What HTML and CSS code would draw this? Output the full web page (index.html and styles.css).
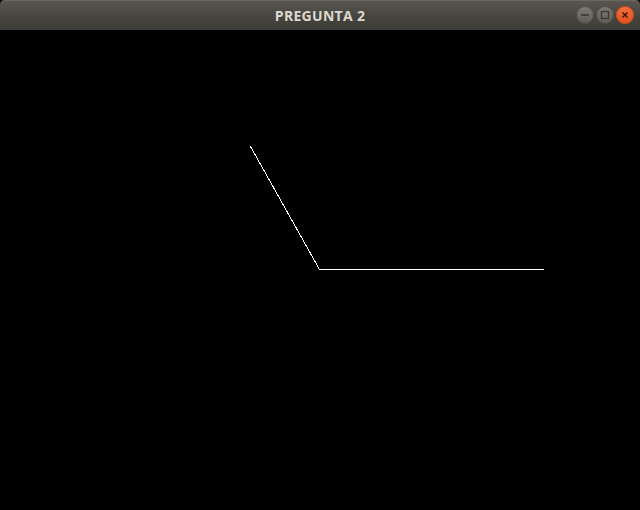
FILE: index.html
```html
<!DOCTYPE html>
<html>
<head>
<meta charset="utf-8">
<link rel="stylesheet" href="styles.css">
</head>
<body>
<div class="window">
  <div class="titlebar">
    <div class="title">PREGUNTA 2</div>
    <div class="controls">
      <span class="btn">
        <svg width="18" height="18" viewBox="0 0 18 18"><line x1="5" y1="9" x2="13" y2="9" stroke="#3a3935" stroke-width="1.6"/></svg>
      </span>
      <span class="btn">
        <svg width="18" height="18" viewBox="0 0 18 18"><rect x="5.5" y="5.5" width="7" height="7" fill="none" stroke="#3a3935" stroke-width="1.3"/></svg>
      </span>
      <span class="btn close">
        <svg width="18" height="18" viewBox="0 0 18 18"><path d="M6.5 6.5 L11.5 11.5 M11.5 6.5 L6.5 11.5" stroke="#3a1a0c" stroke-width="1.4"/></svg>
      </span>
    </div>
  </div>
  <div class="canvas">
    <svg width="640" height="480" viewBox="0 0 640 480" shape-rendering="crispEdges">
      <polyline points="250.5,116.5 319.5,239.5 543.5,239.5" fill="none" stroke="#ffffff" stroke-width="1"/>
    </svg>
  </div>
</div>
</body>
</html>
```
FILE: styles.css
```css
html, body {
  margin: 0;
  padding: 0;
  background: #000;
  width: 640px;
  height: 510px;
  overflow: hidden;
}
.window {
  display: flex;
  flex-direction: column;
  width: 640px;
  height: 510px;
}
.titlebar {
  position: relative;
  height: 30px;
  flex: none;
  background: linear-gradient(#5a5750, #45433e 60%, #3d3c37);
  border-radius: 5px 5px 0 0;
  box-shadow: inset 0 1px 0 #6a675f;
  display: flex;
  align-items: center;
  justify-content: center;
}
.title {
  font-family: "Open Sans", "DejaVu Sans", sans-serif;
  font-weight: 700;
  font-size: 14px;
  color: #dcd8cf;
  letter-spacing: 0.3px;
}
.controls {
  position: absolute;
  right: 6px;
  top: 6px;
  display: flex;
  gap: 2px;
}
.btn {
  width: 18px;
  height: 18px;
  border-radius: 50%;
  background: linear-gradient(#7c7a74, #5e5c57);
  box-shadow: inset 0 0 0 1px #4a4843;
  display: flex;
}
.btn.close {
  background: linear-gradient(#f2703d, #e2501d);
  box-shadow: inset 0 0 0 1px #c0461a;
}
.canvas {
  flex: 1;
  background: #000;
}
.canvas svg {
  display: block;
}
```
